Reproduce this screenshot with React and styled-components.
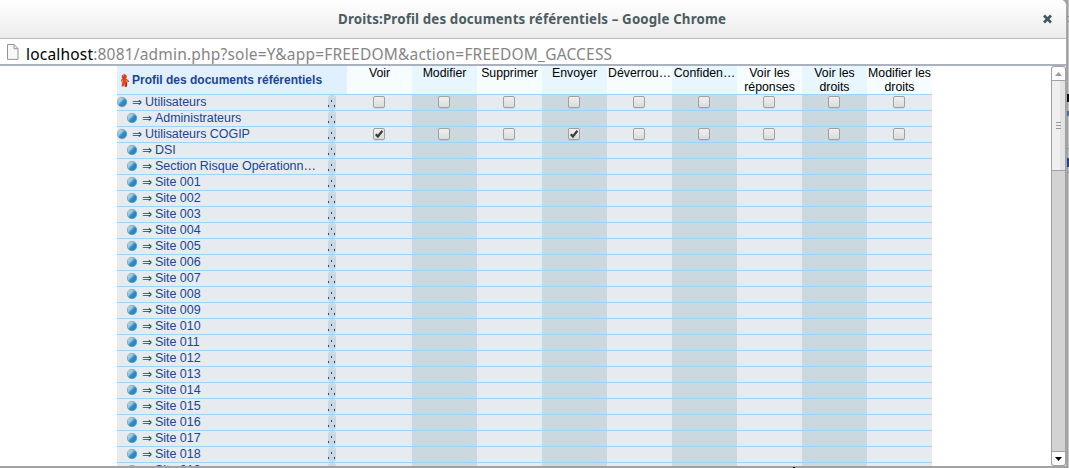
import React from 'react';
import styled, { createGlobalStyle } from 'styled-components';

const GlobalStyle = createGlobalStyle`
  *, *::before, *::after { box-sizing: border-box; }
  html, body { margin: 0; height: 468px; overflow: hidden; background: #fff; }
`;

const Screen = styled.div`
  width: 1069px;
  height: 468px;
  overflow: hidden;
  display: flex;
  background: #a2a2a2;
  font-family: "Liberation Sans", Arial, sans-serif;
  font-size: 12.5px;
  line-height: 14px;
`;
const Window = styled.div`
  width: 1067px;
  height: 466px;
  flex: none;
  display: flex;
  flex-direction: column;
  background: #fff;
  border-radius: 0 6px 0 0;
  border-right: 1px solid #a3a8ac;
  overflow: hidden;
`;
const Behind = styled.div`
  width: 2px;
  height: 468px;
  flex: none;
  position: relative;
  background: linear-gradient(90deg, #a0a0a0 0 1px, #c6c6c6 1px);
`;
const Sliver = styled.i`
  position: absolute;
  right: 0;
  width: 2px;
  top: ${(p) => p.$top}px;
  height: ${(p) => p.$h}px;
  background: ${(p) => p.$c};
`;
const BottomNick = styled.i`
  position: absolute;
  left: 793px;
  top: 467px;
  width: 2px;
  height: 1px;
  background: #111;
`;
const TitleBar = styled.header`
  height: 39px;
  flex: none;
  display: flex;
  align-items: center;
  padding: 0 13px 0 338px;
  background: linear-gradient(#fff, #ececec);
  border-bottom: 1px solid #babac4;
  justify-content: space-between;
`;
const Title = styled.h1`
  margin: 0;
  font: 700 13.3px/20px "Noto Sans", "Open Sans", sans-serif;
  letter-spacing: 0.15px;
  color: #4b5c62;
  white-space: nowrap;
`;
const AddressBar = styled.div`
  height: 27px;
  flex: none;
  display: flex;
  align-items: center;
  padding-left: 7px;
  background: #fff;
  border-bottom: 2px solid #a9b2bd;
`;
const Url = styled.div`
  margin: 4px 0 0 7px;
  font: 400 15.5px/22px "Noto Sans", "Open Sans", sans-serif;
  letter-spacing: 0.19px;
  color: #858585;
  white-space: nowrap;
  b { font-weight: 400; color: #000; }
`;
const Viewport = styled.main`
  height: 400px;
  display: flex;
  justify-content: space-between;
  overflow: hidden;
`;
const Table = styled.div`
  width: 815px;
  flex: none;
  margin-left: 117px;
`;
const Row = styled.div`
  display: grid;
  grid-template-columns: 230px repeat(9, 65px);
  height: ${(p) => (p.$head ? 29 : 16)}px;
  border-bottom: 1px solid #99d5fd;
`;
const HeadName = styled.div`
  display: flex;
  align-items: center;
  padding-left: 3px;
  background: #e0f0ff;
  color: #1c4592;
  font-weight: 700;
  font-size: 12px;
  white-space: nowrap;
  svg { margin-right: 2px; flex: none; }
`;
const HeadCell = styled.div`
  background: ${(p) => (p.$alt ? '#e8f6ff' : '#f6fcff')};
  color: #000;
  text-align: center;
  overflow: hidden;
  white-space: pre;
  font-size: 12.3px;
`;
const NameCell = styled.div`
  display: flex;
  align-items: center;
  height: 15px;
  padding: 0 11px 0 ${(p) => (p.$child ? 10 : 0)}px;
  background: #e6ebef;
  color: #1c4592;
`;
const Bullet = styled.svg`
  width: 11px;
  height: 11px;
  flex: none;
`;
const Arrow = styled.span`
  width: 10px;
  margin: -1px 3px 0 4px;
  flex: none;
  font: 12px/14px "DejaVu Sans", sans-serif;
`;
const Name = styled.span`
  white-space: nowrap;
  flex: 1;
  line-height: 13px;
  letter-spacing: -0.04px;
  i { font-style: normal; color: #333; }
`;
const Handle = styled.svg`
  width: 8px;
  height: 15px;
  flex: none;
`;
const Cell = styled.div`
  display: flex;
  justify-content: center;
  padding: 1px 1px 0 0;
  background: ${(p) => (p.$alt ? '#ccd8e0' : '#e6ebef')};
`;
const Box = styled.span`
  width: 12px;
  height: 12px;
  border: 1px solid #a0a0a0;
  border-radius: 2px;
  background: linear-gradient(#efefef, #dcdcdc);
  box-shadow: 0 1px 0 #00000012;
  svg { display: block; width: 10px; height: 10px; overflow: visible; }
`;
const Scrollbar = styled.div`
  width: 15px;
  height: 400px;
  flex: none;
  display: flex;
  flex-direction: column;
  border: 1px solid #a0a0a0;
  border-width: 0 1px 1px;
  border-radius: 3px;
  background: #d3d3d3;
`;
const ScrollButton = styled.div`
  flex: none;
  display: flex;
  align-items: center;
  justify-content: center;
  background: #fff;
  border: solid #a0a0a0;
  border-width: ${(p) => (p.$down ? '1px 0 0' : '1px 0')};
  height: ${(p) => (p.$down ? 14 : 15)}px;
  border-radius: ${(p) => (p.$down ? '0 0 3px 3px' : '3px 3px 0 0')};
`;
const Thumb = styled.div`
  height: 90px;
  display: flex;
  flex-direction: column;
  align-items: center;
  justify-content: center;
  gap: 2px;
  background: linear-gradient(90deg, #efefef 0 8px, #e3e3e3 8px);
  border-bottom: 1px solid #a0a0a0;
`;
const Grip = styled.i`
  width: 5px;
  height: 1px;
  background: #999;
`;
const Track = styled.div`
  flex: 1;
`;

const columns = [
  'Voir', 'Modifier', 'Supprimer', 'Envoyer', 'Déverrou…', 'Confiden…',
  'Voir les\nréponses', 'Voir les\ndroits', 'Modifier les\ndroits',
];
const rows = [
  { name: 'Utilisateurs', rights: [] },
  { name: 'Administrateurs', child: true },
  { name: 'Utilisateurs COGIP', rights: [0, 3] },
  { name: 'DSI', child: true },
  { name: 'Section Risque Opérationn', child: true, cut: true },
  ...Array.from({ length: 19 }, (_, i) => ({
    name: `Site ${String(i + 1).padStart(3, '0')}`,
    child: true,
  })),
];

function PageIcon() {
  return (
    <svg width="12" height="16" viewBox="0 0 12 16" fill="none">
      <path d="M.5.5h6.6l3.9 4v10.9H.5z" fill="#f7f7f7" stroke="#949494" />
      <path d="M7 .7v4h4" stroke="#949494" />
    </svg>
  );
}

function PersonIcon() {
  return (
    <svg width="10" height="13" viewBox="0 0 10 13">
      <path d="M1.6 4.8h4.6l.6 3.4-.4 4.4H4.6L4.2 10l-.6 2.6H1.6L2 8.6 1 7z" fill="#e2481c" />
      <path d="M6.4 5.4L8.6 7 7 8.6M6.6 8.6v3.6H4.9" fill="none" stroke="#7c2218" strokeWidth="1" />
      <circle cx="4.2" cy="2.8" r="2.5" fill="#d83c18" />
      <path d="M2.6 2.2l1.4-.6M2.4 6.2v2.4" stroke="#ff9158" />
    </svg>
  );
}

function BulletIcon() {
  return (
    <Bullet viewBox="0 0 11 11">
      <defs>
        <linearGradient id="ball" x1="0" y1="0" x2="1" y2="1">
          <stop offset=".15" stopColor="#c3e2f3" />
          <stop offset=".42" stopColor="#7dbbe0" />
          <stop offset=".52" stopColor="#2a8dc6" />
          <stop offset="1" stopColor="#2586be" />
        </linearGradient>
      </defs>
      <circle cx="5" cy="5" r="4.7" fill="url(#ball)" stroke="#64889f" strokeWidth=".6" />
    </Bullet>
  );
}

export default function App() {
  return (
    <Screen>
      <GlobalStyle />
      <Window>
        <TitleBar>
          <Title>Droits:Profil des documents référentiels – Google Chrome</Title>
          <svg width="11" height="10" viewBox="0 0 11 10">
            <path d="M2 1.5l7 7M9 1.5l-7 7" stroke="#41565f" strokeWidth="2.6" />
          </svg>
        </TitleBar>
        <AddressBar>
          <PageIcon />
          <Url><b>localhost</b>:8081/admin.php?sole=Y&amp;app=FREEDOM&amp;action=FREEDOM_GACCESS</Url>
        </AddressBar>
        <Viewport>
          <Table>
            <Row $head>
              <HeadName><PersonIcon />Profil des documents référentiels</HeadName>
              {columns.map((c, i) => <HeadCell key={c} $alt={i % 2 === 1}>{c}</HeadCell>)}
            </Row>
            {rows.map((r) => (
              <Row key={r.name}>
                <NameCell $child={r.child}>
                  <BulletIcon />
                  <Arrow>⇒</Arrow>
                  <Name>{r.name}{r.cut && <i>…</i>}</Name>
                  <Handle viewBox="0 0 8 15">
                    <rect width="8" height="15" rx="3.5" fill="#ccd8e0" />
                    <path d="M3 5h1v2H3zM0 10h1v2H0zM6 10h1v2H6z" fill="#1c4592" />
                  </Handle>
                </NameCell>
                {columns.map((c, i) => (
                  <Cell key={c} $alt={i % 2 === 1}>
                    {r.rights && (
                      <Box>
                        {r.rights.includes(i) && (
                          <svg viewBox="0 0 10 10">
                            <path d="M1.8 5.2l2.1 2.3L8.4 1.8" fill="none" stroke="#3c3c3c" strokeWidth="2.2" />
                          </svg>
                        )}
                      </Box>
                    )}
                  </Cell>
                ))}
              </Row>
            ))}
          </Table>
          <Scrollbar>
            <ScrollButton>
              <svg width="7" height="4"><path d="M3.5 0L7 4H0z" fill="#9a9a9a" /></svg>
            </ScrollButton>
            <Thumb><Grip /><Grip /><Grip /></Thumb>
            <Track />
            <ScrollButton $down>
              <svg width="7" height="4"><path d="M0 0h7L3.5 4z" fill="#000" /></svg>
            </ScrollButton>
          </Scrollbar>
        </Viewport>
      </Window>
      <Behind>
        <Sliver $top={16} $h={1} $c="#8b9292" />
        <Sliver $top={21} $h={1} $c="#8b9292" />
        <Sliver $top={94} $h={8} $c="#111" />
        <Sliver $top={111} $h={5} $c="#4a6aa8" />
        <Sliver $top={148} $h={1} $c="#7f9dbb" />
        <Sliver $top={158} $h={9} $c="#1c4592" />
        <Sliver $top={172} $h={1} $c="#7f9dbb" />
      </Behind>
      <BottomNick />
    </Screen>
  );
}
